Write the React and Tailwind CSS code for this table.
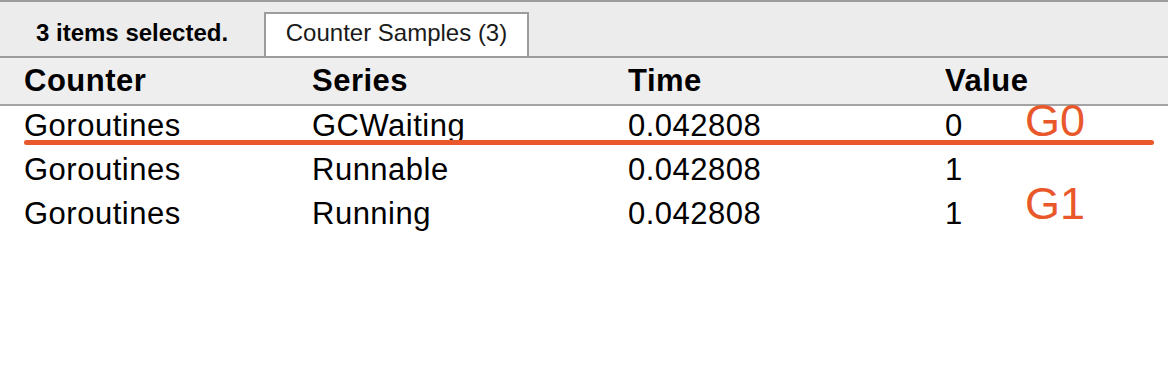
const rows = [
  { counter: "Goroutines", series: "GCWaiting", time: "0.042808", value: "0" },
  { counter: "Goroutines", series: "Runnable", time: "0.042808", value: "1" },
  { counter: "Goroutines", series: "Running", time: "0.042808", value: "1" },
];

const cols = "grid grid-cols-[288px_316px_317px_1fr] pl-6 tracking-[0.5px]";

export default function App() {
  return (
    <div className="relative h-[372px] w-[1168px] overflow-hidden bg-white font-['Liberation_Sans',Arial,sans-serif] text-black">
      {/* tab strip */}
      <div className="flex h-[58px] items-end border-t-2 border-b-2 border-[#9c9c9c] bg-[#ececec] text-[24px]">
        <div className="mb-auto mt-[12px] w-[264px] pl-9 font-bold leading-[38px]">3 items selected.</div>
        <div className="h-[44px] w-[265px] border-x-2 border-t-2 border-[#9c9c9c] bg-white text-center leading-[38px] text-[#1a1a1a]">
          Counter Samples (3)
        </div>
      </div>

      {/* header */}
      <div className={`${cols} h-[48px] border-b-2 border-[#a3a3a3] bg-[#eeeeee] text-[31px] font-bold leading-[46px]`}>
        <div>Counter</div>
        <div>Series</div>
        <div>Time</div>
        <div>Value</div>
      </div>

      {/* body */}
      <div className="text-[31px] leading-[40px]">
        {rows.map((r, i) => (
          <div key={i} className={`${cols} h-[44px]`}>
            <div>{r.counter}</div>
            <div>{r.series}</div>
            <div>{r.time}</div>
            <div>{r.value}</div>
          </div>
        ))}
      </div>

      {/* annotations */}
      <div className="absolute left-6 top-[140px] h-[5px] w-[1130px] rounded-full bg-[#e9582b]" />
      <div className="absolute left-[1025px] top-[99px] text-[45px] leading-[44px] text-[#e9582b]">G0</div>
      <div className="absolute left-[1025px] top-[182px] text-[45px] leading-[44px] text-[#e9582b]">G1</div>
    </div>
  );
}
